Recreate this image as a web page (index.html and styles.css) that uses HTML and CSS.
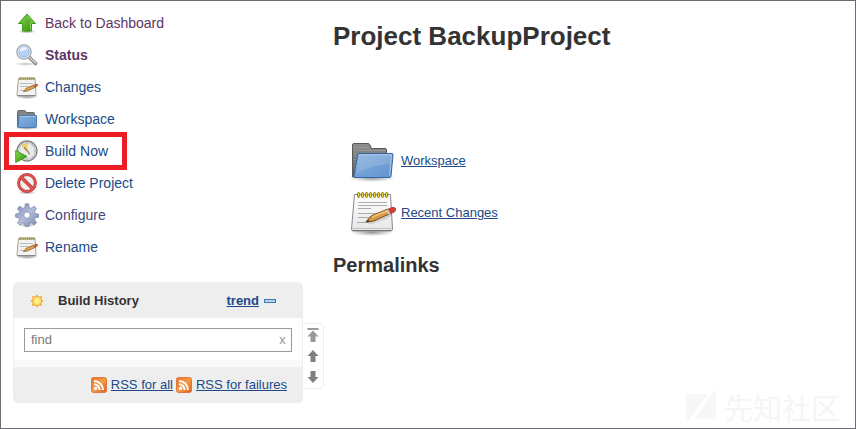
FILE: index.html
```html
<!DOCTYPE html>
<html lang="en">
<head>
<meta charset="utf-8">
<title>BackupProject</title>
<link rel="stylesheet" href="styles.css">
</head>
<body>
<svg class="defs" aria-hidden="true">
  <defs>
    <linearGradient id="green" x1="0" y1="0" x2="1" y2="1"><stop offset="0" stop-color="#8ada4c"/><stop offset="1" stop-color="#2c8c0c"/></linearGradient>
    <linearGradient id="blue" x1="0" y1="0" x2="1" y2="1"><stop offset="0" stop-color="#88afdc"/><stop offset="1" stop-color="#5f93cf"/></linearGradient>
    <linearGradient id="gray" x1="0" y1="0" x2="0" y2="1"><stop offset="0" stop-color="#909090"/><stop offset="1" stop-color="#5c5c5c"/></linearGradient>
    <linearGradient id="paper" x1="0" y1="0" x2="0" y2="1"><stop offset="0" stop-color="#ffffff"/><stop offset="1" stop-color="#e6e6e6"/></linearGradient>
    <linearGradient id="gearfill" x1="0" y1="0" x2="1" y2="1"><stop offset="0" stop-color="#7f8db4"/><stop offset=".5" stop-color="#b3bddb"/><stop offset="1" stop-color="#7484ae"/></linearGradient>
    <linearGradient id="orange" x1="0" y1="0" x2="1" y2="1"><stop offset="0" stop-color="#e8702a"/><stop offset=".5" stop-color="#f79a48"/><stop offset="1" stop-color="#d9601c"/></linearGradient>
    <radialGradient id="sun"><stop offset="0" stop-color="#fff9a8"/><stop offset="1" stop-color="#f9d84c"/></radialGradient>
    <radialGradient id="shade"><stop offset="0" stop-color="#000" stop-opacity=".4"/><stop offset="1" stop-color="#000" stop-opacity="0"/></radialGradient>
    <symbol id="folder" viewBox="0 0 48 48">
      <ellipse cx="24" cy="41" rx="23" ry="4" fill="url(#shade)"/>
      <path d="M4.500 40V8q0-1.500 1.500-1.500h14q1.500 0 2 1.500l1.500 3.500H37q1.500 0 1.500 1.500v27z" fill="url(#gray)" stroke="#5a5a5a"/>
      <path d="M6 10.500h15M6 13.500h31M6 16.500h31M6 19.500h4M6 22.500h4M6 25.500h3M6 28.500h3M6 31.500h2" stroke="#a4a4a4" stroke-width=".8" opacity=".7"/>
      <path d="M10.500 16.500h33.500q1 0 1 1.500l-2 21q0 1.500-1.500 1.500H7q-1.500 0-1-1.500L9.500 18q0-1.500 1-1.500z" fill="url(#blue)" stroke="#3465a4"/>
      <path d="M11 17.700h32.500l-2 21.500" fill="none" stroke="#b4cdea" stroke-width=".9"/>
      <path d="M11 18h32l-.8 9q-18 1-33.500 9z" fill="#fff" opacity=".14"/>
    </symbol>
    <symbol id="folder-small" viewBox="0 0 24 24">
      <ellipse cx="12" cy="21" rx="12" ry="2" fill="url(#shade)"/>
      <path d="M2.500 20V4.500q0-1 1-1h6q1 0 1.300 1l.5 1h7.200q1 0 1 1V20z" fill="#858585" stroke="#666"/>
      <path d="M4.500 8.500h16.500q.5 0 .5.500v10.500q0 1-1 1H3.500q-.7 0-.5-1L4 9q0-.5.500-.5z" fill="url(#blue)" stroke="#4a7cb8"/>
      <path d="M5 9.500h15.500" stroke="#a5c3e6"/>
    </symbol>
    <symbol id="notepad" viewBox="0 0 48 48">
      <ellipse cx="24" cy="43.500" rx="22" ry="3.500" fill="url(#shade)"/>
      <path d="M6.500 5.500h36l2 34.500q0 2-2 2h-37q-2 0-2-2z" fill="url(#paper)" stroke="#888"/>
      <path d="M4.500 39.500h39" stroke="#c4c4c4"/><path d="M4.500 41.500h39" stroke="#777"/>
      <path d="M10 13.500h29M10 16.500h29M10 19.500h13M10 24.500h24M10 28.500h19M9 33.500h12" stroke="#aaa"/>
      <g fill="#ead74c" stroke="#8a7a0a" stroke-width="1"><rect x="9.500" y="3.500" width="2.200" height="5" rx="1.100"/><rect x="13.500" y="3.500" width="2.200" height="5" rx="1.100"/><rect x="17.500" y="3.500" width="2.200" height="5" rx="1.100"/><rect x="21.500" y="3.500" width="2.200" height="5" rx="1.100"/><rect x="25.500" y="3.500" width="2.200" height="5" rx="1.100"/><rect x="29.500" y="3.500" width="2.200" height="5" rx="1.100"/><rect x="33.500" y="3.500" width="2.200" height="5" rx="1.100"/><rect x="37.500" y="3.500" width="2.200" height="5" rx="1.100"/></g>
      <path d="M21 34l17-5 5-4" stroke="#000" stroke-width="3" opacity=".12" fill="none"/>
      <path d="M18 33l5-6 17-7 2.500 4.500-17 7.500z" fill="#d99a45" stroke="#7d4a10"/>
      <path d="M24 28l16-6.500" stroke="#f4c680" stroke-width="1.400"/>
      <path d="M40 20.200l3.500-1.500q3-1 4 .8t-1.500 3.800L42.500 24.500z" fill="#dc3a30" stroke="#8d3026" stroke-width=".7"/>
      <path d="M38 21.200l2-1 2.500 4.400-2 .9z" fill="#cfcfcf"/><path d="M18 33l2-2.600 1.500 1.900z" fill="#332a20"/>
    </symbol>
    <symbol id="notepad-small" viewBox="0 0 24 24">
      <ellipse cx="12" cy="22" rx="11" ry="2" fill="url(#shade)"/>
      <path d="M3.500 3.500h16.500l1 16q0 1.500-1 1.500H3q-1.500 0-1-1.500z" fill="#f3f3f1" stroke="#a2a2a0"/>
      <path d="M2.500 20.500h18" stroke="#888"/>
      <path d="M5 8.500h13M5 11.500h8M5 15.500h9" stroke="#bbb"/>
      <path d="M4 3.500h16" stroke="#a3973a" stroke-width="3" stroke-dasharray="1.500 .5"/>
      <path d="M4 3h16" stroke="#dccb55" stroke-width="1" stroke-dasharray="1 1"/>
      <path d="M8.500 16.500l3-3.500 7.500-3 1.200 2.300-8 3.700z" fill="#dfa04b" stroke="#8d5c22" stroke-width=".8"/>
      <path d="M19 10l2-.9q1.500-.3 1.800.5t-.7 1.600l-1.900 1.100z" fill="#cf6447" stroke="#95522f" stroke-width=".5"/>
    </symbol>
    <symbol id="rss" viewBox="0 0 16 16">
      <rect x=".5" y=".5" width="15" height="15" rx="2" fill="url(#orange)" stroke="#e07a3c"/>
      <circle cx="4.600" cy="11.400" r="1.700" fill="#fff"/>
      <path d="M3 7.300a5.700 5.700 0 0 1 5.700 5.700M3 4a9 9 0 0 1 9 9" fill="none" stroke="#fff" stroke-width="2"/>
    </symbol>
  </defs>
</svg>
<div class="page">
  <aside class="sidebar">
    <nav>
      <ul class="tasks">
        <li><a class="task visited" href="#"><svg class="icon" viewBox="0 0 24 24"><ellipse cx="12" cy="20.500" rx="9" ry="2" fill="url(#shade)"/><path d="M12 3l8.500 9.500H16.500v7.500h-9v-7.500H3.500z" fill="url(#green)" stroke="#3b9a16"/><path d="M12 4.700l6.200 6.900h-2.700v7.300" fill="none" stroke="#a5e877" stroke-width=".7"/></svg>Back to Dashboard</a></li>
        <li><a class="task visited current" href="#"><svg class="icon" viewBox="0 0 24 24"><ellipse cx="11" cy="21" rx="11" ry="2" fill="url(#shade)" opacity=".6"/><path d="M14.500 14.500l6 6" stroke="#8a8a8a" stroke-width="3.600" stroke-linecap="round"/><path d="M14.500 14.500l6 5.500" stroke="#cfcfcf" stroke-width="1.600" stroke-linecap="round"/><circle cx="9" cy="9" r="7.200" fill="#c0d8f2" stroke="#a2a4a8" stroke-width="1.200"/><circle cx="9" cy="9" r="5.900" fill="#b5d1f3" stroke="#e9eff5"/><circle cx="9" cy="9" r="5.200" fill="none" stroke="#8fb2e0" stroke-width=".8"/><path d="M4.500 9a4.500 4.500 0 0 1 8.500-2.500Q8 7 4.500 9z" fill="#e6f1ff"/></svg>Status</a></li>
        <li><a class="task" href="#"><svg class="icon"><use href="#notepad-small"/></svg>Changes</a></li>
        <li><a class="task" href="#"><svg class="icon"><use href="#folder-small"/></svg>Workspace</a></li>
        <li><a class="task marked" href="#"><svg class="icon" viewBox="0 0 24 24"><circle cx="12" cy="12" r="10" fill="#eaeae8" stroke="#85868a" stroke-width="1.400"/><circle cx="12" cy="12" r="8.400" fill="none" stroke="#c4c4c8" stroke-width="1.400"/><path d="M12.500 13L6.500 6.500Q9 3.500 12.500 3.700z" fill="#ecd264"/><path d="M9 8.500l4 4 1.500 3" fill="none" stroke="#8a7c48" stroke-width="1.200"/><path d="M12 3.500v1.500M20 12h-1.500M12 20v-1.500M17.700 6.300l-1 1M17.700 17.700l-1-1" stroke="#aaa" stroke-width=".8"/><path d="M.7 11.500l11.300 6-11.300 6z" fill="url(#green)" stroke="#348f13" stroke-width=".8"/></svg>Build Now</a></li>
        <li><a class="task" href="#"><svg class="icon" viewBox="0 0 24 24"><ellipse cx="12" cy="21.500" rx="9" ry="2" fill="url(#shade)"/><circle cx="12" cy="12" r="8.400" fill="#f4eeee" stroke="#bd3434" stroke-width="3"/><path d="M6.200 6.200l11.600 11.600" stroke="#bd3434" stroke-width="3.400"/><circle cx="12" cy="12" r="8.400" fill="none" stroke="#df5252" stroke-width="1.800"/><path d="M6.200 6.200l11.600 11.600" stroke="#df5252" stroke-width="2.200"/></svg>Delete Project</a></li>
        <li><a class="task visited-soft" href="#"><svg class="icon" viewBox="0 0 24 24"><ellipse cx="12" cy="22" rx="9" ry="2" fill="url(#shade)"/><path fill-rule="evenodd" d="M10.300.8h3.400l.5 3.700 2 .9 3-2.300 2.400 2.400-2.200 3 .8 2 3.300.5v3.200l-3.300.5-.8 2 2.200 3-2.400 2.400-3-2.200-2 .8-.5 3h-3.400l-.5-3-2-.8-3 2.200-2.400-2.400 2.200-3-.8-2L.6 14.200V11l3.200-.5.8-2-2.200-3 2.400-2.400 3 2.300 2-.9zM12 8.900a3.200 3.200 0 1 0 0 6.400 3.200 3.200 0 0 0 0-6.400z" fill="url(#gearfill)" stroke="#7583a8" stroke-width=".7"/></svg>Configure</a></li>
        <li><a class="task" href="#"><svg class="icon"><use href="#notepad-small"/></svg>Rename</a></li>
      </ul>
    </nav>
    <section class="history">
      <header class="history-head">
        <svg class="sun" viewBox="0 0 16 16"><path d="M8 1l1.500 2.800L13 3l-.8 3.500L15 8l-2.800 1.500L13 13l-3.500-.8L8 15l-1.500-2.800L3 13l.8-3.500L1 8l2.800-1.500L3 3l3.500.8z" fill="#f3a93e"/><circle cx="8" cy="8" r="4.600" fill="url(#sun)" stroke="#eca53e" stroke-width=".7"/></svg>
        <h2 class="history-title">Build History</h2>
        <a class="trend" href="#">trend</a>
        <button class="collapse" type="button" aria-label="Collapse"></button>
      </header>
      <div class="search">
        <div class="search-box">
          <input class="search-input" type="text" placeholder="find" aria-label="Find builds">
          <button class="clear" type="button" aria-label="Clear">x</button>
        </div>
      </div>
      <footer class="feeds">
        <a class="feed" href="#"><svg class="rss"><use href="#rss"/></svg><span>RSS for all</span></a>
        <a class="feed" href="#"><svg class="rss"><use href="#rss"/></svg><span>RSS for failures</span></a>
      </footer>
      <div class="pager">
        <button type="button" aria-label="Newest builds"><svg class="arrow" viewBox="0 0 12 14"><path d="M.5 0h11v2H.500zM6 2.500l5.500 6H8.500V14h-5V8.500H.500z" fill="#999"/></svg></button>
        <button type="button" aria-label="Newer builds"><svg class="arrow" viewBox="0 0 12 14"><path d="M6 1l5.500 6H8.500v6h-5V7H.500z" fill="#808080"/></svg></button>
        <button type="button" aria-label="Older builds"><svg class="arrow" viewBox="0 0 12 14"><path d="M6 13l5.500-6H8.500V1h-5v6H.500z" fill="#808080"/></svg></button>
      </div>
    </section>
  </aside>
  <main class="main">
    <h1 class="title">Project BackupProject</h1>
    <ul class="links">
      <li><a class="link" href="#"><svg class="big"><use href="#folder"/></svg><span>Workspace</span></a></li>
      <li><a class="link" href="#"><svg class="big"><use href="#notepad"/></svg><span>Recent Changes</span></a></li>
    </ul>
    <h2 class="permalinks">Permalinks</h2>
  </main>
  <div class="watermark" lang="zh"><svg class="mark" viewBox="0 0 30 36"><path d="M0 5h22L0 34zM30 0v30H8z" fill="#f7f7f7"/></svg>先知社区</div>
</div>
</body>
</html>
```
FILE: styles.css
```css
* { box-sizing: border-box; }

body {
  margin: 0;
  background: #fff;
  color: #333;
  font: 13px/20px "Liberation Sans", Arial, sans-serif;
}

ul { margin: 0; padding: 0; list-style: none; }
h1, h2 { margin: 0; }
svg { display: block; flex: none; }
a { color: #204a87; }
button { margin: 0; padding: 0; border: 0; background: none; font: inherit; }

.defs { position: absolute; width: 0; height: 0; }

.page {
  position: relative;
  display: flex;
  gap: 30px;
  min-height: 100vh;
  padding: 6px 12px;
  border: 1px solid #6d6c72;
}

.sidebar { flex: 0 0 290px; }

.task {
  position: relative;
  display: flex;
  align-items: center;
  gap: 6px;
  width: max-content;
  height: 32px;
  padding-left: 2px;
  font-size: 14px;
  text-decoration: none;
}
.visited { color: #5c3566; }
.visited-soft { color: #44447a; }
.current { font-weight: bold; }
.icon { width: 24px; height: 24px; }

.marked::after {
  content: "";
  position: absolute;
  inset: -3px -19px -3px -9px;
  border: 5px solid #ed1c24;
}

.history {
  position: relative;
  margin-top: 19px;
  border: 1px solid #eee;
  border-radius: 5px;
}
.history-head {
  display: flex;
  align-items: center;
  height: 35px;
  padding: 0 26px 0 15px;
  background: #eee;
}
.sun { width: 16px; height: 16px; margin-right: 13px; }
.history-title { font-size: 13px; }
.trend { margin-left: auto; font-weight: bold; }
.collapse {
  width: 12px;
  height: 4px;
  margin-left: 5px;
  border: 1px solid #3f78b5;
  background: #b8d2ea;
}

.search {
  padding: 10px 10px 8px;
  border-bottom: 7px solid #f9f9f9;
}
.search-box {
  display: flex;
  height: 24px;
  border: 1px solid #999;
}
.search-input {
  flex: 1;
  min-width: 0;
  padding: 0 6px;
  border: 0;
  background: none;
  color: #333;
  font: inherit;
  outline: 0;
}
.search-input::placeholder { color: #777; }
.clear { width: 17px; color: #999; }

.feeds {
  display: flex;
  justify-content: flex-end;
  gap: 3px;
  height: 35px;
  padding-right: 15px;
  background: #eee;
}
.feed { display: flex; align-items: center; gap: 4px; }
.rss { width: 16px; height: 16px; }

.pager {
  position: absolute;
  top: 40px;
  left: 100%;
  display: flex;
  flex-direction: column;
  justify-content: space-around;
  align-items: center;
  width: 22px;
  height: 66px;
  border: 1px solid #eee;
  border-radius: 0 5px 5px 0;
  background: #fff;
}
.arrow { width: 12px; height: 14px; }

.main { flex: 1; min-width: 0; }
.title { margin-top: 13px; font-size: 26px; line-height: 32px; }
.links {
  display: grid;
  gap: 4px;
  margin: 85px 0 0 15px;
}
.link { display: flex; align-items: center; gap: 5px; width: max-content; }
.big { width: 48px; height: 48px; }
.permalinks { margin-top: 16px; font-size: 20px; line-height: 24px; }

.watermark {
  position: absolute;
  right: 15px;
  bottom: 3px;
  display: flex;
  align-items: center;
  gap: 8px;
  color: #f5f5f5;
  font: 29px/36px "Noto Sans CJK SC", sans-serif;
}
.mark { width: 30px; height: 36px; }
```
